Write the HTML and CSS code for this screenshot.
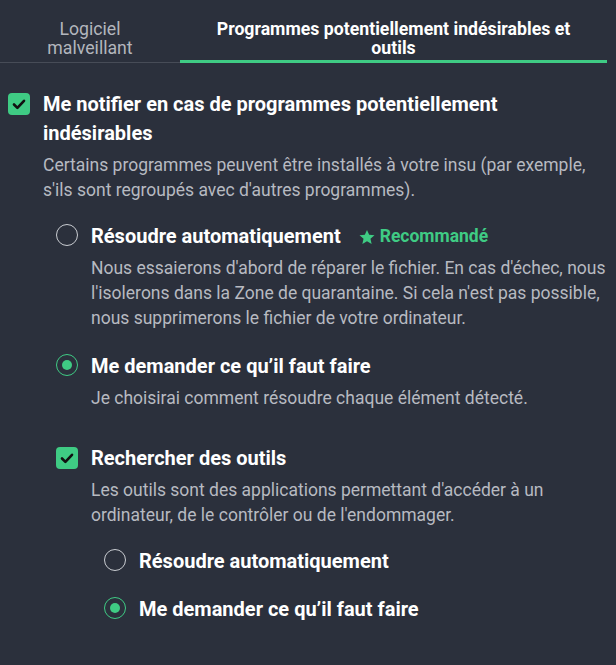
FILE: index.html
```html
<!DOCTYPE html>
<html lang="fr">
<head>
	<meta charset="utf-8">
	<title>Paramètres</title>
	<link rel="stylesheet" href="styles.css">
</head>
<body>
	<div class="page">

		<!-- Onglets -->
		<div class="tabs">
			<div class="tab">Logiciel<br>malveillant</div>
			<div class="tab tab-active">Programmes potentiellement indésirables et outils</div>
		</div>

		<!-- Options -->
		<div class="option option-top">
			<span class="checkbox"><svg viewBox="0 0 22 22" width="22" height="22"><path d="M6 11.5l3.4 3.4L16 7.8" fill="none" stroke="#111" stroke-width="2.6" stroke-linecap="round" stroke-linejoin="round"/></svg></span>
			<div class="option-body">
				<div class="option-title">Me notifier en cas de programmes potentiellement indésirables</div>
				<p class="option-desc">Certains programmes peuvent être installés à votre insu (par exemple, s'ils sont regroupés avec d'autres programmes).</p>
			</div>
		</div>

		<div class="sub">
			<div class="option">
				<span class="radio"></span>
				<div class="option-body">
					<div class="option-title">Résoudre automatiquement <span class="badge"><svg viewBox="0 0 24 24" width="18" height="18"><path d="M12 2.5l2.9 6.6 7.1.6-5.4 4.7 1.6 7-6.2-3.7-6.2 3.7 1.6-7L2 9.7l7.1-.6z" fill="#3fcb84"/></svg>Recommandé</span></div>
					<p class="option-desc">Nous essaierons d'abord de réparer le fichier. En cas d'échec, nous l'isolerons dans la Zone de quarantaine. Si cela n'est pas possible, nous supprimerons le fichier de votre ordinateur.</p>
				</div>
			</div>

			<div class="option">
				<span class="radio radio-checked"></span>
				<div class="option-body">
					<div class="option-title">Me demander ce qu’il faut faire</div>
					<p class="option-desc">Je choisirai comment résoudre chaque élément détecté.</p>
				</div>
			</div>

			<div class="option option-group">
				<span class="checkbox"><svg viewBox="0 0 22 22" width="22" height="22"><path d="M6 11.5l3.4 3.4L16 7.8" fill="none" stroke="#111" stroke-width="2.6" stroke-linecap="round" stroke-linejoin="round"/></svg></span>
				<div class="option-body">
					<div class="option-title">Rechercher des outils</div>
					<p class="option-desc">Les outils sont des applications permettant d'accéder à un ordinateur, de le contrôler ou de l'endommager.</p>
				</div>
			</div>

			<div class="sub">
				<div class="option">
					<span class="radio"></span>
					<div class="option-body">
						<div class="option-title">Résoudre automatiquement</div>
					</div>
				</div>

				<div class="option">
					<span class="radio radio-checked"></span>
					<div class="option-body">
						<div class="option-title">Me demander ce qu’il faut faire</div>
					</div>
				</div>
			</div>
		</div>

	</div>
</body>
</html>
```

FILE: styles.css
```css
* {
	box-sizing: border-box;
}

body {
	margin: 0;
	background-color: #2b303c;
	font-family: Roboto, "Noto Sans", sans-serif;
	color: #fff;
}

.page {
	padding: 20px 9px 40px 8px;
}

/* Tabs */
.tabs {
	display: flex;
	margin-left: -8px;
}

.tab {
	font-size: 17.7px;
	line-height: 19px;
	text-align: center;
	color: #b3b6bd;
	padding-bottom: 2px;
	border-bottom: 1px solid #474c57;
}

.tab:first-child {
	width: 180px;
}

.tab-active {
	flex: 1;
	padding-left: 24px;
	padding-right: 24px;
	font-weight: 700;
	color: #fff;
	border-bottom: 3px solid #3fcb84;
}

/* Options */
.option {
	display: flex;
	gap: 13px;
}

.option-top {
	margin-top: 27px;
}

.option-top .option-body {
	padding-right: 10px;
}

.option-body {
	flex: 1;
}

.option-title {
	font-size: 20px;
	font-weight: 700;
	line-height: 29px;
}

.option-desc {
	margin: 5px 0 0;
	font-size: 17.5px;
	line-height: 25px;
	color: #b7bac1;
}

.sub {
	display: flex;
	flex-direction: column;
	gap: 21px;
	padding-left: 48px;
	margin-top: 19px;
}

.option-group {
	margin-top: 12px;
}

.sub .sub {
	margin-top: -2px;
	gap: 19px;
}

/* Controls */
.checkbox {
	flex: none;
	width: 22px;
	height: 22px;
	margin-top: 3px;
	border-radius: 4px;
	background-color: #3fcb84;
}

.checkbox svg {
	display: block;
}

.radio {
	flex: none;
	width: 22px;
	height: 22px;
	margin-top: 2px;
	border: 1.5px solid #c9ccd1;
	border-radius: 50%;
	display: flex;
	align-items: center;
	justify-content: center;
}

.radio-checked {
	border-color: #3fcb84;
}

.radio-checked::after {
	content: "";
	width: 10px;
	height: 10px;
	border-radius: 50%;
	background-color: #3fcb84;
}

.badge {
	display: inline-flex;
	align-items: center;
	gap: 4px;
	margin-left: 12px;
	font-size: 17.5px;
	color: #3fcb84;
	vertical-align: top;
}
```
